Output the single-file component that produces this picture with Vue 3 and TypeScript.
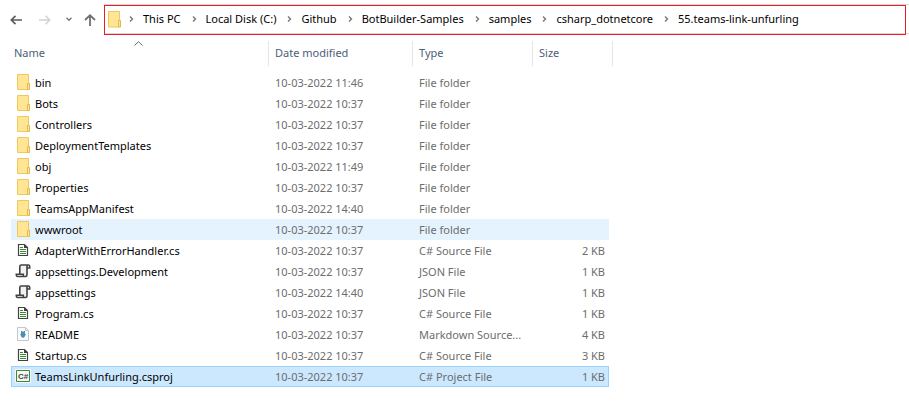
<script setup lang="ts">
type Kind = 'folder' | 'source' | 'json' | 'markdown' | 'project'

interface Entry {
  name: string
  modified: string
  type: string
  size: string
  kind: Kind
  state?: 'hover' | 'selected'
}

const crumbs: string[] = [
  'This PC',
  'Local Disk (C:)',
  'Github',
  'BotBuilder-Samples',
  'samples',
  'csharp_dotnetcore',
  '55.teams-link-unfurling',
]

const folder = (name: string, time: string, state?: Entry['state']): Entry => ({
  name, modified: `10-03-2022 ${time}`, type: 'File folder', size: '', kind: 'folder', state,
})
const file = (name: string, time: string, type: string, kb: number, kind: Kind, state?: Entry['state']): Entry => ({
  name, modified: `10-03-2022 ${time}`, type, size: `${kb} KB`, kind, state,
})

const entries: Entry[] = [
  folder('bin', '11:46'),
  folder('Bots', '10:37'),
  folder('Controllers', '10:37'),
  folder('DeploymentTemplates', '10:37'),
  folder('obj', '11:49'),
  folder('Properties', '10:37'),
  folder('TeamsAppManifest', '14:40'),
  folder('wwwroot', '10:37', 'hover'),
  file('AdapterWithErrorHandler.cs', '10:37', 'C# Source File', 2, 'source'),
  file('appsettings.Development', '10:37', 'JSON File', 1, 'json'),
  file('appsettings', '14:40', 'JSON File', 1, 'json'),
  file('Program.cs', '10:37', 'C# Source File', 1, 'source'),
  file('README', '10:37', 'Markdown Source...', 4, 'markdown'),
  file('Startup.cs', '10:37', 'C# Source File', 3, 'source'),
  file('TeamsLinkUnfurling.csproj', '10:37', 'C# Project File', 1, 'project', 'selected'),
]
</script>

<template>
  <main class="explorer">
    <header class="toolbar">
      <nav class="history" aria-label="History">
        <button type="button" class="tool" aria-label="Back">
          <svg width="12" height="10" viewBox="0 0 12 10"><path d="M5.5 .8 1.3 5l4.2 4.2M1.5 5H12" fill="none" stroke="#5c5c5c" stroke-width="1.7" /></svg>
        </button>
        <button type="button" class="tool" aria-label="Forward">
          <svg width="12" height="10" viewBox="0 0 12 10"><path d="M6.5 .8 10.7 5 6.5 9.2M10.5 5H0" fill="none" stroke="#d2d2d2" stroke-width="1.5" /></svg>
        </button>
        <button type="button" class="tool recent" aria-label="Recent locations">
          <svg width="6" height="5" viewBox="0 0 6 5"><path d="M.5 .8 3 3.3 5.5 .8" fill="none" stroke="#777" stroke-width="1.4" /></svg>
        </button>
        <button type="button" class="tool" aria-label="Up">
          <svg width="12" height="12" viewBox="0 0 12 12"><path d="M1 6 6 1.3 11 6M6 1.5V12" fill="none" stroke="#707070" stroke-width="1.8" /></svg>
        </button>
      </nav>
      <div class="field">
        <nav class="address" aria-label="Address">
          <svg class="place" width="13" height="17" viewBox="0 0 13 17">
            <path d="M.5 .5h11v15.5H.5z" fill="#ffe594" stroke="#edc95c" />
            <path d="M10.5 9.5h2V16h-2z" fill="#ffe594" stroke="#e3b94a" />
          </svg>
          <ol class="crumbs">
            <li v-for="crumb in crumbs" :key="crumb">
              <svg class="chevron" width="5" height="6" viewBox="0 0 5 6"><path d="M1 .5 3.5 3 1 5.5" fill="none" stroke="#777" stroke-width="1.4" /></svg>
              <a href="#">{{ crumb }}</a>
            </li>
          </ol>
        </nav>
      </div>
    </header>

    <table class="files">
      <colgroup>
        <col class="c-name"><col class="c-date"><col class="c-type"><col class="c-size"><col class="c-end">
      </colgroup>
      <thead>
        <tr>
          <th scope="col" class="sorted">
            Name
            <svg class="sort" width="9" height="5" viewBox="0 0 9 5"><path d="M.5 4.5 4.5 .7l4 3.8" fill="none" stroke="#666" /></svg>
          </th>
          <th scope="col">Date modified</th>
          <th scope="col">Type</th>
          <th scope="col" colspan="2">Size</th>
        </tr>
      </thead>
      <tbody>
        <tr v-for="entry in entries" :key="entry.name" :class="entry.state">
          <td>
            <div class="name">
              <svg class="icon" width="16" height="16" viewBox="0 0 16 16">
                <g v-if="entry.kind === 'folder'">
                  <path d="M2.5 .5h11v15h-11z" fill="#ffe594" stroke="#edc95c" />
                  <path d="M12.5 9.5h2v6h-2z" fill="#ffe594" stroke="#e3b94a" />
                </g>
                <g v-else-if="entry.kind === 'source'">
                  <path d="M3.5 2.5h6l3 3v8h-9z" fill="#fff" stroke="#424242" stroke-width="1.2" />
                  <path d="M9 2v4h4z" fill="#424242" />
                  <path d="M5 5.5h3M5 7.5h6M5 9.5h6M5 11.5h6" stroke="#388a34" />
                </g>
                <g v-else-if="entry.kind === 'json'">
                  <path d="M5 2.5h7v11H5z" fill="#f2f2f2" />
                  <path d="M4.8 11V3.5Q4.8 2 6.3 2h7q1.4 0 1.4 1.4V5h-2.5M12 2.5v9.3q0 1.7-1.5 1.7H2.8Q1.3 13.5 1.3 12v-.8h7v1q0 1.3 1.5 1.3" fill="none" stroke="#424242" stroke-width="1.6" />
                </g>
                <g v-else-if="entry.kind === 'markdown'">
                  <path d="M2.5 1.5h8l3 3v10h-11z" fill="#f9fafb" stroke="#c2c8cd" />
                  <path d="M10.5 1.5v3h3" fill="none" stroke="#c2c8cd" />
                  <path d="M6 5h1l1 1 1-1h1v3h1l-1.5 3L8 12 6.5 11 5 8h1z" fill="#4b8fb3" />
                </g>
                <g v-else>
                  <path d="M0 1h16v14H0z" fill="#f6f6f6" />
                  <path d="M1.5 2.5h13v11h-13z" fill="#f6f6f6" stroke="#388a34" />
                  <text x="8" y="11" text-anchor="middle" class="glyph">C#</text>
                </g>
              </svg>
              <span>{{ entry.name }}</span>
            </div>
          </td>
          <td>{{ entry.modified }}</td>
          <td>{{ entry.type }}</td>
          <td class="size">{{ entry.size }}</td>
          <td class="end"></td>
        </tr>
      </tbody>
    </table>
  </main>
</template>

<style>
body {
  margin: 0;
  background: #fff;
}
</style>

<style scoped>
.explorer {
  padding-top: 4px;
  font-family: "Noto Sans", "Open Sans", sans-serif;
  font-size: 11px;
  line-height: 18px;
  color: #000;
}
.toolbar {
  display: flex;
  height: 31px;
}
.history {
  display: flex;
  align-items: center;
  gap: 17px;
  box-sizing: border-box;
  width: 104px;
  padding-left: 10px;
}
.tool {
  display: flex;
  padding: 0;
  border: 0;
  background: none;
}
.recent {
  margin: 0 -5px 0 -2px;
}
.field {
  display: flex;
  flex: 1;
  min-width: 0;
  padding: 1px 3px 0 0;
  background:
    linear-gradient(#d9d9d9, #d9d9d9) 0 0 / 100% 1px no-repeat,
    linear-gradient(#d9d9d9, #d9d9d9) 0 29px / 100% 1px no-repeat;
}
.address {
  display: flex;
  align-items: center;
  flex: 1;
  min-width: 0;
  padding: 0 0 2px 3px;
  border: 1px solid #ed1c24;
}
.place {
  flex: none;
}
.crumbs {
  display: flex;
  gap: 3px;
  margin: 0;
  padding: 0;
  list-style: none;
  white-space: nowrap;
}
.crumbs li {
  display: flex;
  align-items: center;
}
.chevron {
  margin: 0 9px 0 8px;
}
.crumbs a {
  color: #000;
  text-decoration: none;
}
.files {
  margin: 6px 0 0 11px;
  border-collapse: separate;
  border-spacing: 0;
  table-layout: fixed;
  width: 602px;
}
.c-name { width: 258px; }
.c-date { width: 144px; }
.c-type { width: 120px; }
.c-size { width: 76px; }
.c-end { width: 4px; }
th {
  height: 23px;
  padding: 0 0 2px 6px;
  border-right: 1px solid #e5e5e5;
  font-weight: 400;
  text-align: left;
  color: #4c607a;
}
th.sorted {
  position: relative;
  padding-left: 3px;
}
.sort {
  position: absolute;
  top: 0;
  left: 123px;
}
thead::after {
  content: "";
  display: block;
  height: 6px;
}
td {
  padding: 2px 0 1px 6px;
  vertical-align: top;
  color: #6d6d6d;
  white-space: nowrap;
}
.name {
  display: flex;
  align-items: flex-start;
  gap: 4px;
  margin-left: -2px;
  color: #000;
}
.glyph {
  font: bold 8px "Liberation Sans", sans-serif;
  fill: #424242;
}
.size {
  padding-right: 4px;
  text-align: right;
}
.end {
  padding: 0;
}
.hover td:not(.end) {
  background: #e5f3ff;
}
.selected td:not(.end) {
  background: #cce8ff;
  box-shadow: inset 0 1px #99d1ff, inset 0 -1px #99d1ff;
}
.selected td:first-child:not(.end) {
  box-shadow: inset 0 1px #99d1ff, inset 0 -1px #99d1ff, inset 1px 0 #99d1ff;
}
.selected td.size:not(.end) {
  box-shadow: inset 0 1px #99d1ff, inset 0 -1px #99d1ff, inset -1px 0 #99d1ff;
}
</style>
